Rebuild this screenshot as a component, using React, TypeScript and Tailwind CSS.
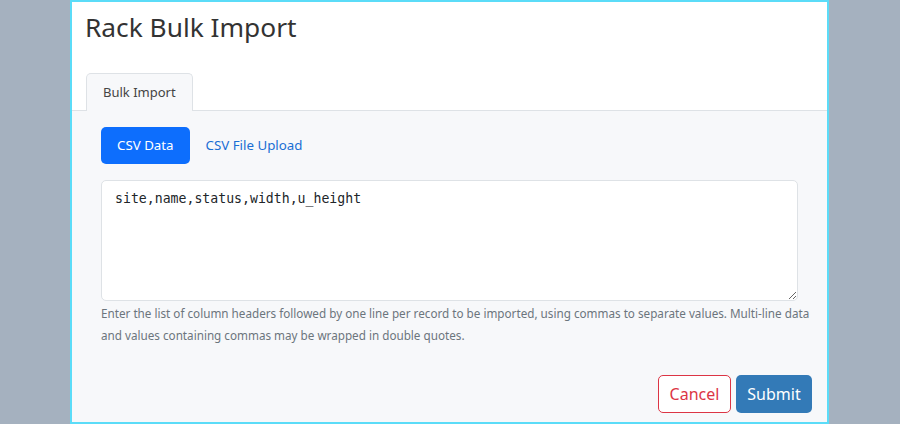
import React, { useState } from "react";

const sans = "font-['Segoe_UI','Noto_Sans','Open_Sans',sans-serif]";

export default function App() {
  const [mode, setMode] = useState<"csv" | "file">("csv");
  const [data, setData] = useState<string>("site,name,status,width,u_height");

  return (
    <div className={`w-[900px] h-[424px] bg-[#a5b1bf] flex ${sans}`}>
      <div className="ml-[70px] w-[759px] h-[424px] border-2 border-[#5bdcf8] bg-white flex flex-col">
        {/* page title */}
        <h1 className="pl-[13px] pt-[7px] h-[71px] text-[26.3px] leading-[36px] text-[#333]">
          Rack Bulk Import
        </h1>

        {/* tabs */}
        <div className="flex px-[14px] border-b border-[#dee2e6]">
          <div className="h-[38px] px-[16px] flex items-center border border-b-0 border-[#dee2e6] rounded-t-[5px] bg-[#f7f8fa] text-[13px] text-[#444] -mb-px">
            Bulk Import
          </div>
        </div>

        <div className="flex-1 bg-[#f7f8fa] pl-[29px] pr-[15px] pt-[16px] flex flex-col">
          <div className="flex items-center">
            <button
              onClick={() => setMode("csv")}
              className={`h-[37px] px-[16px] rounded-[5px] text-[13.3px] ${
                mode === "csv" ? "bg-[#0d6efd] text-white" : "text-[#1a6fd4]"
              }`}
            >
              CSV Data
            </button>
            <button
              onClick={() => setMode("file")}
              className={`h-[37px] px-[16px] rounded-[5px] text-[13.3px] ${
                mode === "file" ? "bg-[#0d6efd] text-white" : "text-[#1a6fd4]"
              }`}
            >
              CSV File Upload
            </button>
          </div>

          <textarea
            value={data}
            onChange={(e) => setData(e.target.value)}
            className="mt-[16px] w-[697px] h-[121px] bg-white border border-[#dee2e6] rounded-[5px] px-[13px] py-[7px] text-[13.2px] leading-[21px] text-[#212529] font-['DejaVu_Sans_Mono',monospace] outline-none"
          />
          <p className="mt-[1px] text-[11.7px] leading-[22px] text-[#6c757d] w-[715px]">
            Enter the list of column headers followed by one line per record to be imported, using commas to separate values. Multi-line data and values containing commas may be wrapped in double quotes.
          </p>

          <div className="mt-auto mb-[9px] flex justify-end gap-[5px]">
            <button className="h-[38px] w-[73px] border border-[#dc3545] rounded-[5px] text-[16px] text-[#dc3545] bg-white">
              Cancel
            </button>
            <button className="h-[38px] w-[76px] bg-[#337ab7] rounded-[5px] text-[16px] text-white">
              Submit
            </button>
          </div>
        </div>
      </div>
    </div>
  );
}
